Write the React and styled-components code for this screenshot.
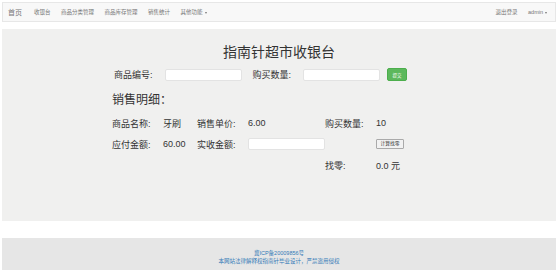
import React from 'react'
import styled, { createGlobalStyle } from 'styled-components'

const GlobalStyle = createGlobalStyle`
  html, body {
    margin: 0;
    padding: 0;
    background: #fff;
    font-family: 'Liberation Sans', 'Noto Sans CJK SC', sans-serif;
    color: #333;
  }
`

const Page = styled.div`
  padding: 2px 2px 0;
  width: 558px;
  height: 270px;
  box-sizing: border-box;
  display: flex;
  flex-direction: column;
  overflow: hidden;
`

const Navbar = styled.nav`
  height: 20px;
  box-sizing: border-box;
  background: #f8f8f8;
  border: 1px solid #e7e7e7;
  display: flex;
  align-items: center;
  padding: 0 8px 0 5px;
  color: #777;
`

const Brand = styled.span`
  font-size: 7px;
  margin-right: 12px;
`

const NavList = styled.div`
  display: flex;
  align-items: center;
  gap: 10.5px;
  flex: ${p => (p.$grow ? 1 : 'none')};
`

const NavItem = styled.span`
  font-size: 5.5px;
  color: #777;
  white-space: nowrap;
`

const Caret = styled.span`
  display: inline-block;
  margin-left: 2px;
  border-top: 2px solid #777;
  border-left: 1.5px solid transparent;
  border-right: 1.5px solid transparent;
  vertical-align: middle;
`

const Jumbotron = styled.section`
  margin-top: 7px;
  height: 192px;
  box-sizing: border-box;
  background: #f0f0ef;
  padding-top: 15px;
`

const Title = styled.h1`
  margin: 0;
  font-size: 14px;
  line-height: 16px;
  font-weight: normal;
  text-align: center;
  color: #333;
`

const FormRow = styled.div`
  display: flex;
  align-items: center;
  margin-top: 8px;
  padding-left: 112px;
  height: 13px;
`

const Label = styled.span`
  font-size: 9px;
  color: #333;
  white-space: nowrap;
  margin-right: ${p => p.$gap || 0}px;
`

const TextInput = styled.input`
  width: 77px;
  height: 12px;
  box-sizing: border-box;
  border: 1px solid #e3e3e3;
  border-radius: 2px;
  background: #fff;
  padding: 0;
  margin-right: ${p => p.$gap || 0}px;
`

const SubmitButton = styled.button`
  width: 20px;
  height: 13px;
  padding: 0;
  border: 1px solid #4cae4c;
  border-radius: 2px;
  background: #5cb85c;
  color: #fff;
  font-size: 4.5px;
  font-family: inherit;
`

const SectionHeading = styled.h2`
  margin: 12px 0 0 110px;
  font-size: 12px;
  line-height: 14px;
  font-weight: normal;
  color: #333;
`

const Details = styled.div`
  display: grid;
  grid-template-columns: 51px 34px 51px 77px 51px auto;
  grid-auto-rows: 20px;
  row-gap: 1px;
  align-items: center;
  margin: 6px 0 0 110px;
  font-size: 9px;
  color: #333;
`

const Cell = styled.span`
  grid-column: ${p => p.$col};
  white-space: nowrap;
`

const CalcButton = styled.button`
  grid-column: 6;
  justify-self: start;
  width: 28px;
  height: 10px;
  padding: 0;
  border: 1px solid #aaa;
  border-radius: 1px;
  background: #f2f2f2;
  color: #333;
  font-size: 4.8px;
  line-height: 8px;
  font-family: inherit;
`

const Footer = styled.footer`
  margin-top: 17px;
  flex: 1;
  background: #e6e6e6;
  display: flex;
  flex-direction: column;
  align-items: center;
  padding-top: 11px;
  box-sizing: border-box;
`

const FooterLine = styled.span`
  font-size: 5.5px;
  line-height: 8px;
  color: #337ab7;
`

export default function App() {
  return (
    <>
      <GlobalStyle />
      <Page>
        <Navbar>
          <Brand>首页</Brand>
          <NavList $grow>
            <NavItem>收银台</NavItem>
            <NavItem>商品分类管理</NavItem>
            <NavItem>商品库存管理</NavItem>
            <NavItem>销售统计</NavItem>
            <NavItem>其他功能<Caret /></NavItem>
          </NavList>
          <NavList>
            <NavItem>退出登录</NavItem>
            <NavItem>admin<Caret /></NavItem>
          </NavList>
        </Navbar>
        <Jumbotron>
          <Title>指南针超市收银台</Title>
          <FormRow>
            <Label $gap={12}>商品编号:</Label>
            <TextInput $gap={11} />
            <Label $gap={12}>购买数量:</Label>
            <TextInput $gap={7} />
            <SubmitButton>提交</SubmitButton>
          </FormRow>
          <SectionHeading>销售明细：</SectionHeading>
          <Details>
            <Cell $col={1}>商品名称:</Cell>
            <Cell $col={2}>牙刷</Cell>
            <Cell $col={3}>销售单价:</Cell>
            <Cell $col={4}>6.00</Cell>
            <Cell $col={5}>购买数量:</Cell>
            <Cell $col={6}>10</Cell>

            <Cell $col={1}>应付金额:</Cell>
            <Cell $col={2}>60.00</Cell>
            <Cell $col={3}>实收金额:</Cell>
            <Cell $col={4}><TextInput /></Cell>
            <CalcButton>计算找零</CalcButton>

            <Cell $col={5}>找零:</Cell>
            <Cell $col={6}>0.0 元</Cell>
          </Details>
        </Jumbotron>
        <Footer>
          <FooterLine>冀ICP备20009856号</FooterLine>
          <FooterLine>本网站法律解释权指南针毕业设计，严禁盗用侵权</FooterLine>
        </Footer>
      </Page>
    </>
  )
}
